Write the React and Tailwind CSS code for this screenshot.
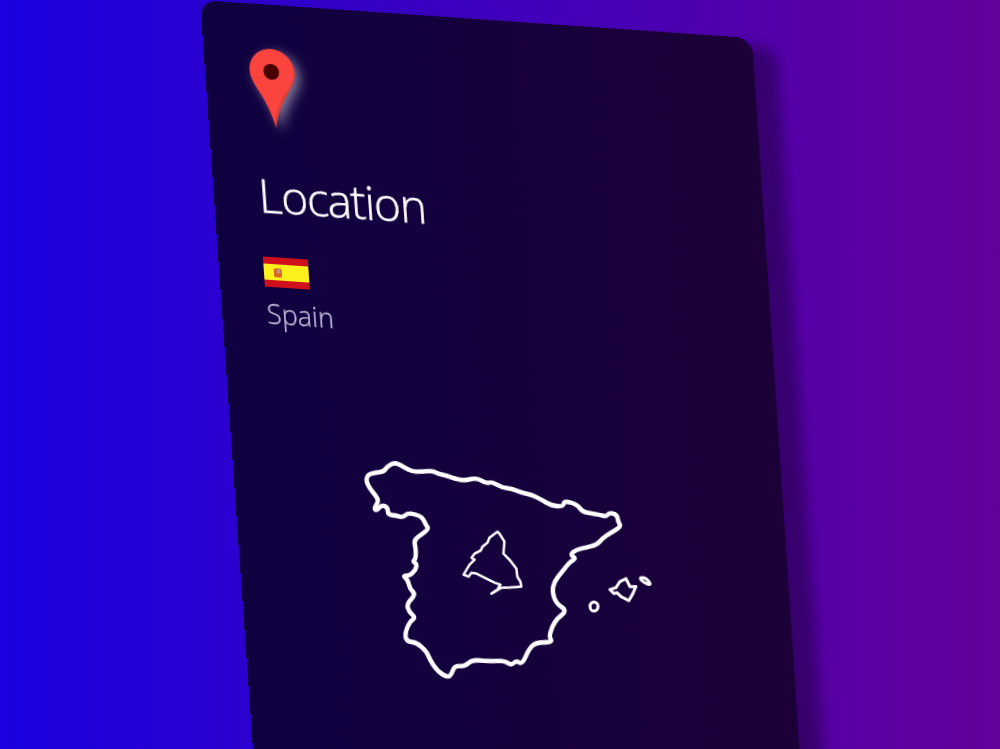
// points are traced in page coordinates, the group below maps them back into the card
const mainland = [
  [366, 479], [368, 473], [375, 471], [384, 470], [387, 465], [394, 461], [400, 463], [408, 468], [415, 470], [422, 470],
  [433, 469], [438, 472], [447, 474], [455, 477], [465, 479], [477, 476], [487, 482], [492, 480], [503, 486], [512, 487],
  [522, 491], [532, 493], [542, 498], [552, 504], [564, 505], [565, 499], [578, 503], [583, 510], [592, 512], [600, 513],
  [607, 515], [610, 511], [618, 513], [619, 520], [622, 525], [612, 531], [603, 537], [598, 543], [587, 546], [577, 548],
  [571, 553], [577, 557], [571, 560], [563, 570], [555, 580], [553, 590], [557, 602], [568, 609], [558, 617], [553, 625],
  [550, 635], [553, 640], [547, 641], [537, 641], [530, 647], [523, 663], [517, 659], [512, 664], [505, 659], [490, 660],
  [473, 658], [465, 665], [455, 664], [452, 673], [448, 676], [438, 670], [430, 658], [427, 650], [417, 641], [407, 640],
  [405, 632], [410, 620], [416, 616], [409, 610], [407, 602], [416, 593], [410, 587], [408, 578], [403, 574], [410, 574],
  [416, 568], [417, 562], [413, 560], [416, 557], [416, 547], [414, 538], [423, 532], [429, 527], [426, 523], [424, 518],
  [420, 514], [408, 511], [403, 516], [397, 514], [388, 513], [388, 506], [382, 503], [377, 509], [374, 507], [379, 499],
  [375, 493], [370, 487],
];
const madrid = [
  [498, 530], [490, 536], [488, 541], [483, 545], [481, 549], [475, 552], [472, 556], [475, 558], [470, 563], [467, 568],
  [464, 573], [469, 575], [472, 571], [477, 572], [487, 577], [495, 581], [501, 583], [498, 588], [492, 592], [502, 586],
  [510, 586], [522, 585], [521, 580], [518, 575], [517, 567], [510, 558], [504, 552], [505, 540], [500, 532],
];
const mallorca = [
  [611, 588], [617, 586], [621, 580], [627, 577], [631, 585], [637, 585], [634, 592], [630, 599], [622, 595], [618, 591], [615, 592],
];
const menorca = [[640, 576], [647, 576], [653, 584], [645, 581]];

// round the joints: run a curve through the midpoints of the traced line
const smooth = (pts) => {
  const mid = (a, b) => [(a[0] + b[0]) / 2, (a[1] + b[1]) / 2];
  const start = mid(pts[pts.length - 1], pts[0]);
  let d = `M${start[0]} ${start[1]}`;
  pts.forEach((p, i) => {
    const m = mid(p, pts[(i + 1) % pts.length]);
    d += ` Q${p[0]} ${p[1]} ${m[0]} ${m[1]}`;
  });
  return d + " Z";
};
const line = (pts) => "M" + pts.map((p) => p.join(" ")).join(" L") + " Z";

export default function App() {
  return (
    <div className="h-[749px] overflow-hidden pl-[200px] font-['Open_Sans',sans-serif] [background:linear-gradient(to_right,#1a00e0,#64009a)]">
      <div className="flex h-[900px] w-[552px] origin-top-left flex-col rounded-2xl pl-[45px] pt-[44px] shadow-[24px_8px_14px_rgba(0,0,0,0.35)] [background:linear-gradient(to_right,#0f0040,#1c0038)] [will-change:transform] [transform:matrix3d(1,0.069,0,0,0.0712,1.007,0,0.000007,0,0,1,0,0,0,0,1)]">
        <svg viewBox="0 0 46 80" className="h-[79px] w-[45px] overflow-visible [filter:drop-shadow(5px_4px_6px_rgba(255,255,255,0.45))]">
          <path
            d="M23 0 C10 0 0 10 0 23 C0 34 8 42 14 54 C18 62 21 70 23 80 C25 70 28 62 32 54 C38 42 46 34 46 23 C46 10 36 0 23 0 Z"
            fill="#d8403a"
          />
          <path
            d="M23 0 C10 0 0 10 0 22 C0 33 8 41 13 52 C17 60 20 68 22 76 C23 66 27 58 31 50 C37 39 45 32 45 22 C45 10 36 0 23 0 Z"
            fill="#fb443d"
          />
          <circle cx="22" cy="23" r="8" fill="#4a0000" />
        </svg>
        <h1 className="mt-[38px] text-[46px] leading-[58px] font-light tracking-[-1.2px] text-white blur-[0.3px] [-webkit-text-stroke:0.5px_white]">Location</h1>
        <svg viewBox="0 0 45 30" className="mt-[33px] h-[30px] w-[45px] blur-[0.3px]">
          <rect width="45" height="30" fill="#cf101c" />
          <rect y="7" width="45" height="16" fill="#fdf01c" />
          <rect x="10" y="11" width="8" height="9" rx="2" fill="#d9661f" />
          <rect x="13" y="12" width="3" height="4" fill="#a99cb0" />
        </svg>
        <p className="mt-[10px] text-[27px] leading-[34px] font-light text-[#c4bedc] blur-[0.3px] [-webkit-text-stroke:0.3px_#c4bedc]">Spain</p>
        <svg viewBox="0 0 400 300" className="mt-[93px] ml-[55px] h-[300px] w-[400px] shrink-0 blur-[0.4px]" fill="none" stroke="#ffffff" strokeLinejoin="round" strokeLinecap="round">
          <g transform="matrix(1.0048 -0.0693 -0.0703 1.0048 -301.03 -405.14)">
            <path d={smooth(mainland)} strokeWidth="4.5" />
            <path d={line(madrid)} strokeWidth="2.5" />
            <path d={line(mallorca)} strokeWidth="3" />
            <path d={smooth(menorca)} strokeWidth="3" />
            <ellipse cx="595" cy="605" rx="4" ry="4.5" strokeWidth="3" />
          </g>
        </svg>
      </div>
    </div>
  );
}
